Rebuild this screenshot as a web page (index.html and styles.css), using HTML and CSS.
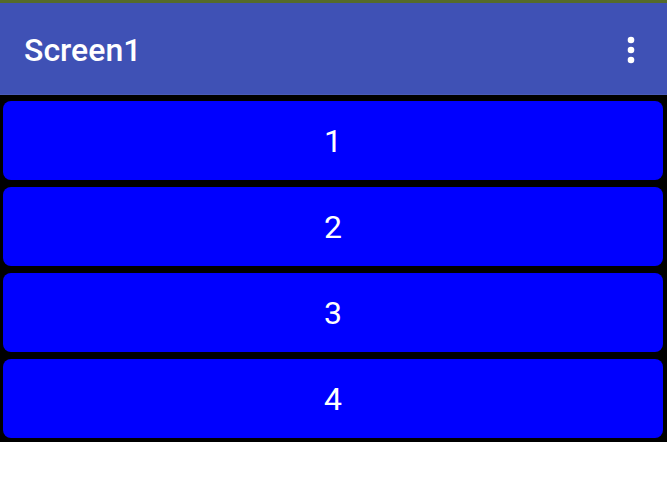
FILE: index.html
```html
<!DOCTYPE html>
<html>
<head>
<meta charset="utf-8">
<link rel="stylesheet" href="styles.css">
</head>
<body>
<div class="status"></div>
<header class="appbar">
  <span class="title">Screen1</span>
  <svg class="menu" width="12" height="30" viewBox="0 0 12 30">
    <circle cx="6" cy="5" r="3.3" fill="#fff"/>
    <circle cx="6" cy="15" r="3.3" fill="#fff"/>
    <circle cx="6" cy="25" r="3.3" fill="#fff"/>
  </svg>
</header>
<main class="list">
  <button class="btn">1</button>
  <button class="btn">2</button>
  <button class="btn">3</button>
  <button class="btn">4</button>
</main>
</body>
</html>
```
FILE: styles.css
```css
html, body {
  margin: 0;
  padding: 0;
  background: #ffffff;
  font-family: Roboto, "Liberation Sans", sans-serif;
}
.status {
  height: 3px;
  background: #556b2a;
}
.appbar {
  height: 91px;
  background: #3f51b5;
  border-bottom: 1px solid #4a5bb8;
  display: flex;
  align-items: center;
  justify-content: space-between;
  padding: 0 30px 0 24px;
}
.title {
  color: #ffffff;
  font-size: 32px;
  font-weight: 500;
  line-height: 1;
  margin-top: 2px;
}
.menu {
  display: block;
  margin-top: 2px;
}
.list {
  background: #000000;
  height: 347px;
  box-sizing: border-box;
  padding: 6px 4px 0 3px;
  display: flex;
  flex-direction: column;
  gap: 7px;
}
.btn {
  height: 79px;
  border: none;
  border-radius: 8px;
  background: #0000ff;
  color: #ffffff;
  font-family: Roboto, "Liberation Sans", sans-serif;
  font-size: 32px;
  font-weight: 400;
  padding: 0;
  margin: 0;
  display: flex;
  align-items: center;
  justify-content: center;
}
```
